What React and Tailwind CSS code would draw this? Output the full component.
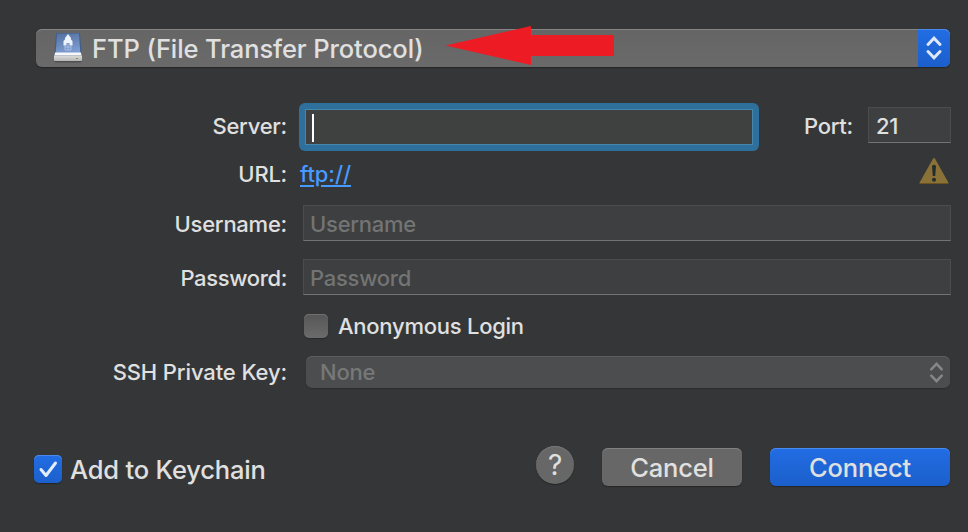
import React from 'react';

function Label({ children }) {
  return (
    <div className="w-[287px] shrink-0 text-right leading-[30px] whitespace-nowrap">
      {children}
    </div>
  );
}

function Chevrons({ className }) {
  return (
    <svg className={className} viewBox="0 0 16 24" fill="none" stroke="currentColor" strokeWidth="2.900" strokeLinecap="round">
      <path d="M2 8.500 8 2.200l6 6.300M2 15.500l6 6.300 6-6.300" />
    </svg>
  );
}

function DriveIcon() {
  return (
    <svg className="ml-[17px] mt-[3px] h-[32px] w-[30px]" viewBox="0 0 30 32">
      <defs>
        <linearGradient id="lid" x1="0" y1="0" x2="0.3" y2="1">
          <stop offset="0" stopColor="#526f9f" />
          <stop offset="1" stopColor="#7c9bd0" />
        </linearGradient>
        <linearGradient id="base" x1="0" y1="0" x2="0" y2="1">
          <stop offset="0" stopColor="#dcdcdc" />
          <stop offset="1" stopColor="#b5b5b5" />
        </linearGradient>
      </defs>
      <path d="M1.500 28h27v1.500q0 1-1.500 1H3q-1.500 0-1.500-1z" fill="#454545" opacity=".7" />
      <path d="M3 1h24l1.500 22v5h-27v-5z" fill="#3f5d8b" />
      <path d="M4 1.500h22L27.300 21H2.700z" fill="url(#lid)" />
      <path d="M2 20.500h26l.5 3h-27z" fill="#f7f7f7" />
      <path d="M1 23.500h28V28q0 1-1 1H2q-1 0-1-1z" fill="url(#base)" />
      <path d="M12 6 15 2l3 4v1.500l1.500 1.500v4.500h-3V11h-3v2.500h-3V9L12 7.500z" fill="#edf3fc" />
      <path d="M12 13v5h6v-5M15 11v7M12 15h6" fill="none" stroke="#a9bfe3" strokeWidth="1" />
      <path d="M23 26.500h2" stroke="#7e9a4c" strokeWidth="1.200" />
    </svg>
  );
}

function Field({ placeholder }) {
  return (
    <div className="ml-4 h-[36px] w-[648px] border border-[#4b4c4d] border-b-[#727373] bg-[#3e3f40] pl-[6px] leading-[37px] text-[#737474]">
      <span>{placeholder}</span>
    </div>
  );
}

export default function App() {
  return (
    <main className="flex h-[532px] w-[968px] flex-col overflow-hidden bg-[#353637] pt-[29px] font-['Inter','Liberation_Sans',sans-serif] text-[22px] font-[480] tracking-[-0.25px] text-[#e0e0e0]">
      <div className="relative ml-9 flex h-[38px] w-[914px] shrink-0 overflow-visible rounded-[6px] bg-linear-to-b from-[#656565] to-[#6a6a6a] shadow-[inset_0_1px_0_#858585,0_1px_1px_#242526]">
        <DriveIcon />
        <span className="ml-[9px] text-[25.5px] leading-[39px] tracking-[-0.1px] whitespace-nowrap">FTP (File Transfer Protocol)</span>
        <svg className="absolute left-[409px] top-[-4px] h-[42px] w-[170px]" viewBox="0 0 170 42">
          <path d="M.5 20.500 86 1v9h83v21H86v9z" fill="#ed1c24" />
        </svg>
        <div className="ml-auto flex w-8 items-center justify-center rounded-r-[6px] bg-linear-to-b from-[#226de4] to-[#1b5fcb] text-[#dfe9fb] shadow-[inset_0_1px_0_#4a8aed]">
          <Chevrons className="h-6 w-4" />
        </div>
      </div>

      <div className="mt-9 flex h-12 shrink-0 items-center">
        <div className="mb-[2px]">
          <Label>Server:</Label>
        </div>
        <div className="ml-3 h-12 w-[460px] rounded-[6px] bg-[#2e709b] p-[6px]">
          <div className="flex h-full items-center border border-[#4588ae] bg-[#3f4040] pl-[6px]">
            <div className="mt-px h-7 w-0.5 bg-white" />
          </div>
        </div>
        <span className="mb-[2px] ml-[42px] w-[52px] text-right whitespace-nowrap">Port:</span>
        <div className="ml-[15px] mb-[4px] h-[36px] w-[83px] border border-[#4b4c4d] border-b-[#727373] bg-[#3e3f40] pl-[7px] leading-[37px]">21</div>
      </div>

      <div className="flex h-[46px] shrink-0 items-center">
        <Label>URL:</Label>
        <a className="ml-[13px] tracking-[-0.1px] text-[#479aff] underline decoration-2 underline-offset-[3px]">ftp://</a>
        <svg className="ml-auto mr-[18px] mb-[7px] h-[28px] w-[32px]" viewBox="0 0 32 28">
          <path d="M16 2 29.500 26h-27z" fill="#8a7137" stroke="#8a7137" strokeWidth="2" strokeLinejoin="round" />
          <path d="M2 26.500h28" stroke="#6d5221" strokeWidth="1" />
          <path d="M14 9q2-2.400 4 0l-.8 10h-2.400z" fill="#252c2d" />
          <circle cx="16" cy="22.700" r="2" fill="#252c2d" />
        </svg>
      </div>

      <div className="mt-2 flex h-9 shrink-0 items-center">
        <div className="mt-[2px]">
          <Label>Username:</Label>
        </div>
        <Field placeholder="Username" />
      </div>
      <div className="mt-[18px] flex h-9 shrink-0 items-center">
        <div className="mt-[2px] tracking-[-0.35px]">
          <Label>Password:</Label>
        </div>
        <Field placeholder="Password" />
      </div>

      <div className="mt-[19px] flex h-6 shrink-0 items-center pl-[304px]">
        <div className="h-6 w-6 rounded-[5px] bg-linear-to-b from-[#565657] to-[#6b6b6c] shadow-[inset_0_1px_0_#707070,0_1px_1px_#28292a]" />
        <span className="ml-[10px]">Anonymous Login</span>
      </div>

      <div className="mt-[18px] flex h-8 shrink-0 items-center">
        <div className="tracking-[-0.12px]">
          <Label>SSH Private Key:</Label>
        </div>
        <div className="ml-[19px] flex h-8 w-[644px] items-center rounded-[6px] bg-[#4c4d4e] pl-[14px] pr-[6px] text-[#777878] shadow-[inset_0_1px_0_#5b5c5d,0_1px_1px_#2b2c2d]">
          <span>None</span>
          <Chevrons className="ml-auto h-[21px] w-[15px] text-[#858686]" />
        </div>
      </div>

      <div className="mt-[58px] flex h-10 shrink-0 items-end pl-[34px] text-[25.5px] tracking-[-0.18px]">
        <div className="mb-[3px] flex h-7 w-7 items-center justify-center rounded-[5px] bg-linear-to-b from-[#226de4] to-[#1b5fcb] shadow-[inset_0_1px_0_#4a8aed,0_1px_1px_#242526]">
          <svg className="h-7 w-7" viewBox="0 0 28 28" fill="none" stroke="#e4edfc" strokeWidth="3" strokeLinecap="round" strokeLinejoin="round">
            <path d="m7 14.500 5 6L21.500 8" />
          </svg>
        </div>
        <span className="ml-2 w-[300px] leading-[32px]">Add to Keychain</span>
        <div className="mb-[2px] ml-[166px] h-[38px] w-[38px] rounded-full bg-[#676767] text-center text-[28px] font-normal leading-[39px] shadow-[inset_0_1px_0_#777,0_1px_1px_#242526]">?</div>
        <button className="ml-7 h-[38px] w-[140px] rounded-[6px] bg-[#676767] leading-[39px] shadow-[inset_0_1px_0_#818181,0_1px_1px_#242526]">Cancel</button>
        <button className="ml-7 h-[38px] w-[180px] rounded-[6px] bg-linear-to-b from-[#226de4] to-[#1b5fcb] leading-[39px] shadow-[inset_0_1px_0_#4a8aed,0_1px_1px_#242526]">Connect</button>
      </div>
    </main>
  );
}
